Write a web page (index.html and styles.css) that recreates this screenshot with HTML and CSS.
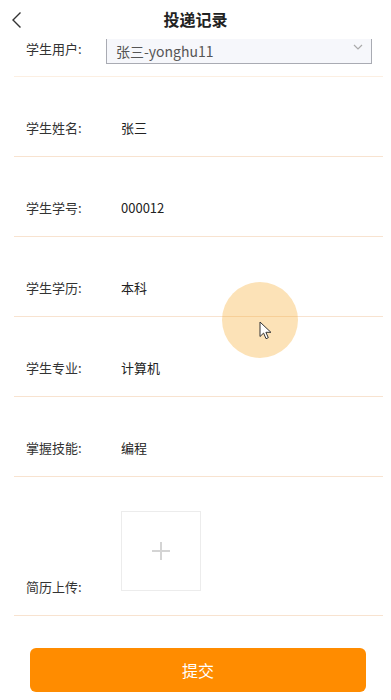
FILE: index.html
```html
<!DOCTYPE html>
<html lang="zh-CN">
<head>
    <meta charset="UTF-8">
    <meta name="viewport" content="width=device-width, initial-scale=1.0">
    <title>投递记录</title>
    <link rel="stylesheet" href="styles.css">
</head>
<body>
  <div class="page">
    <header class="header">
      <a class="back" href="#">
        <svg width="12" height="18" viewBox="0 0 12 18">
          <polyline points="9.5,1.5 2,9 9.5,16.5" fill="none" stroke="#333" stroke-width="1.4"/>
        </svg>
      </a>
      <h1 class="title">投递记录</h1>
      <span></span>
    </header>

    <section class="form">
      <div class="row row-user">
        <span class="label">学生用户:</span>
        <div class="select">
          <span>张三-yonghu11</span>
          <svg width="10" height="6" viewBox="0 0 10 6">
            <polyline points="1,1 5,5 9,1" fill="none" stroke="#aaa" stroke-width="1.2"/>
          </svg>
        </div>
      </div>
      <div class="row">
        <span class="label">学生姓名:</span>
        <span class="value">张三</span>
      </div>
      <div class="row">
        <span class="label">学生学号:</span>
        <span class="value">000012</span>
      </div>
      <div class="row">
        <span class="label">学生学历:</span>
        <span class="value">本科</span>
      </div>
      <div class="row">
        <span class="label">学生专业:</span>
        <span class="value">计算机</span>
      </div>
      <div class="row">
        <span class="label">掌握技能:</span>
        <span class="value">编程</span>
      </div>
      <div class="row row-upload">
        <span class="label">简历上传:</span>
        <div class="upload">
          <svg width="20" height="20" viewBox="0 0 20 20">
            <path d="M10 1v18M1 10h18" stroke="#d4d4d4" stroke-width="2"/>
          </svg>
        </div>
      </div>
    </section>

    <button type="button" class="submit">提交</button>

    <!-- touch indicator from the recording -->
    <div class="touch">
      <svg class="cursor" width="13" height="19" viewBox="0 0 13 19">
        <path d="M1 1v14.5l3.6-3.4 2.4 5.6 2.3-1-2.4-5.4h5z" fill="#fff" stroke="#333" stroke-width="1" stroke-linejoin="round"/>
      </svg>
    </div>
  </div>
</body>
</html>
```

FILE: styles.css
```css
* {
  margin: 0;
  padding: 0;
  box-sizing: border-box;
}
html, body {
  background: #fff;
  font-family: "Noto Sans CJK SC", "Noto Sans", sans-serif;
  color: #333;
}
.page {
  position: relative;
  width: 391px;
  height: 700px;
  overflow: hidden;
}
.header {
  display: grid;
  grid-template-columns: 40px 1fr 40px;
  align-items: center;
  height: 39px;
}
.back {
  display: flex;
  padding-left: 11px;
  padding-bottom: 2px;
}
.title {
  text-align: center;
  font-size: 16px;
  font-weight: bold;
  color: #222;
  line-height: 39px;
  padding-bottom: 2px;
}
.form {
  margin: 0 8px 0 14px;
}
.row {
  display: flex;
  align-items: center;
  padding: 42px 0 20px 12px;
  border-bottom: 1px solid #f8e3d0;
  font-size: 13px;
  line-height: 17px;
}
.label {
  width: 95px;
  flex-shrink: 0;
  color: #333;
}
.value {
  color: #222;
}
.row-user {
  padding: 0 11px 12px 12px;
  border-bottom-color: #fcefe2;
}
.row-user .label {
  width: 80px;
  margin-top: -6px;
}
.select {
  flex: 1;
  height: 25px;
  display: flex;
  align-items: center;
  justify-content: space-between;
  padding: 0 8px 0 9px;
  background: #f6f7fb;
  border: 1px solid #a9abb3;
  border-top: none;
  font-size: 14px;
  color: #555;
}
.select svg {
  margin-bottom: 8px;
}
.row-upload {
  align-items: flex-end;
  padding: 34px 0 24px 12px;
}
.row-upload .label {
  margin-bottom: -4px;
}
.upload {
  width: 80px;
  height: 80px;
  border: 1px solid #ececec;
  display: flex;
  align-items: center;
  justify-content: center;
}
.submit {
  display: block;
  width: 336px;
  height: 44px;
  margin: 32px 0 0 30px;
  border: none;
  border-radius: 6px;
  background: #ff8c00;
  color: #fff;
  font-family: inherit;
  font-size: 16px;
}
.touch {
  position: absolute;
  left: 222px;
  top: 282px;
  width: 76px;
  height: 76px;
  border-radius: 50%;
  background: rgba(245, 166, 35, 0.33);
}
.cursor {
  position: absolute;
  left: 37px;
  top: 39px;
}
```
